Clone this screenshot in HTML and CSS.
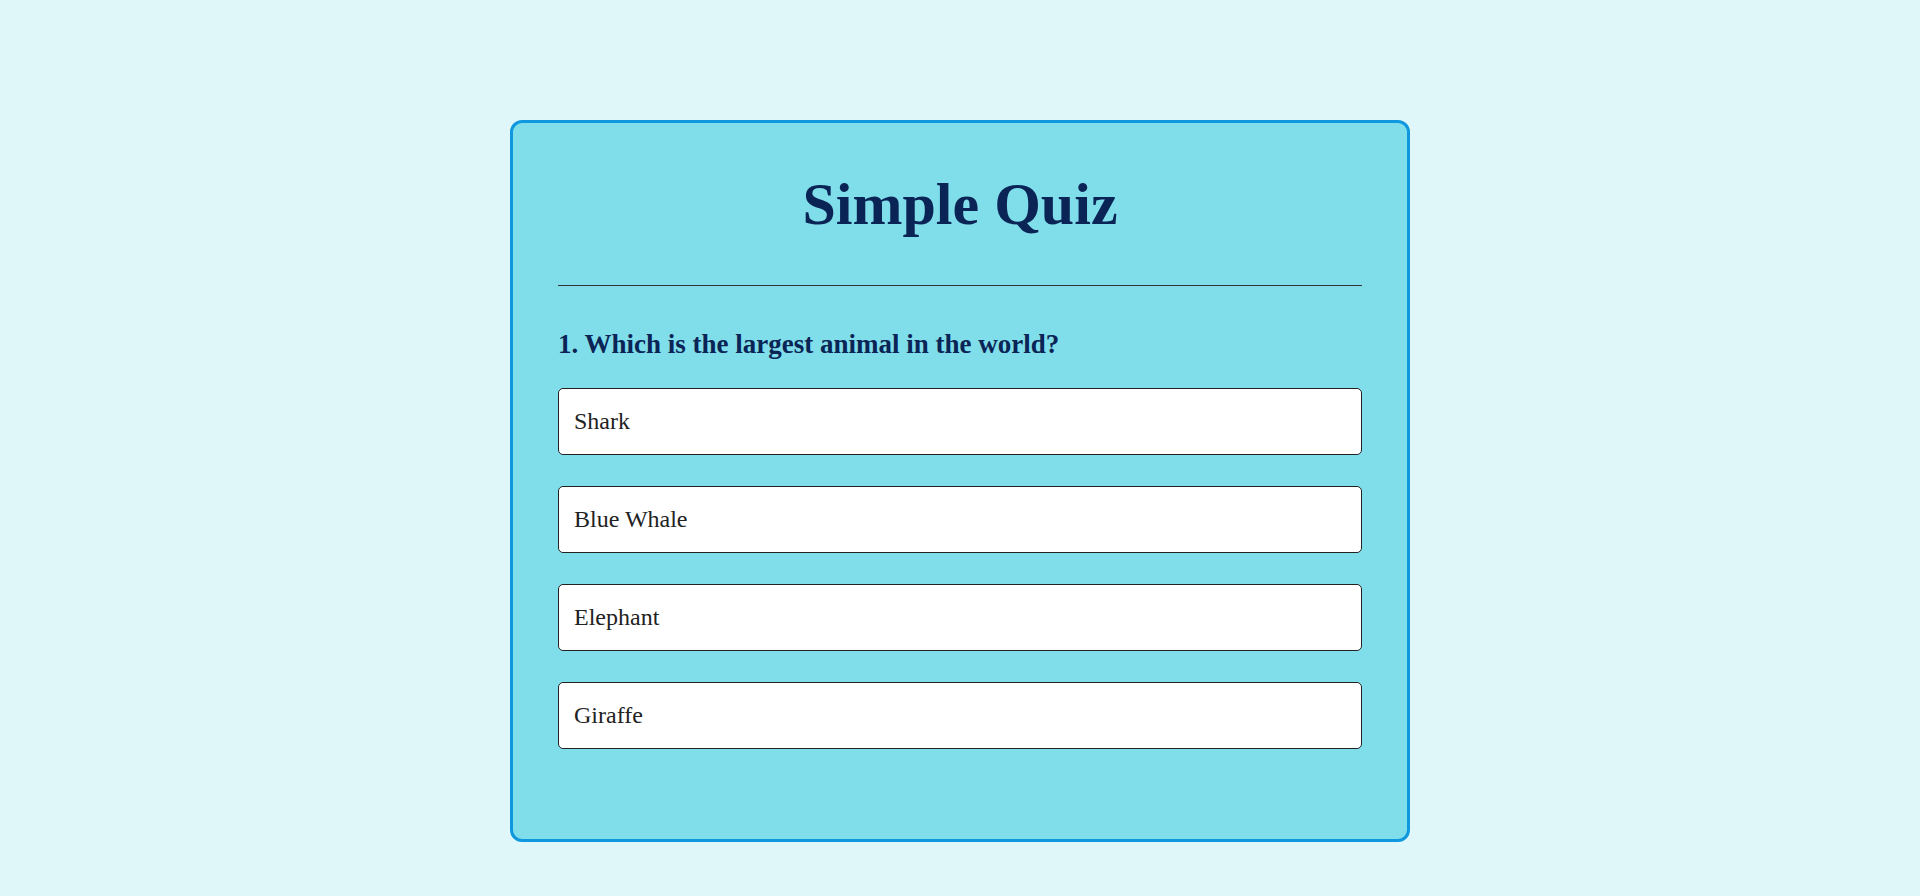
FILE: index.html
```html
<!DOCTYPE html>
<html>
<head>
<meta charset="utf-8">
<title>Simple Quiz</title>
<link rel="stylesheet" href="styles.css">
</head>
<body>
<div class="app">
  <h1 class="title">Simple Quiz</h1>
  <hr class="divider">
  <div class="quiz">
    <h2 class="question">1. Which is the largest animal in the world?</h2>
    <div class="answers">
      <button class="btn">Shark</button>
      <button class="btn">Blue Whale</button>
      <button class="btn">Elephant</button>
      <button class="btn">Giraffe</button>
    </div>
  </div>
</div>
</body>
</html>
```
FILE: styles.css
```css
* {
  box-sizing: border-box;
}
body {
  margin: 0;
  background: #e0f7fa;
  font-family: "Liberation Serif", "Times New Roman", serif;
}
.app {
  width: 900px;
  margin: 120px auto 0;
  background: #80deea;
  border: 3px solid #0f98dd;
  border-radius: 12px;
  padding: 30px 45px 90px;
}
.title {
  margin: 0;
  text-align: center;
  font-size: 60px;
  font-weight: bold;
  color: #0a2456;
  line-height: 1.15;
  padding-top: 17px;
}
.divider {
  border: 0;
  border-top: 1px solid #333;
  margin: 46px 0 0;
}
.question {
  margin: 43px 0 0;
  font-size: 27px;
  font-weight: bold;
  color: #0a2456;
  line-height: 1.15;
}
.answers {
  display: flex;
  flex-direction: column;
  gap: 31px;
  margin-top: 28px;
}
.btn {
  display: block;
  width: 100%;
  height: 67px;
  background: #fff;
  border: 1px solid #222;
  border-radius: 5px;
  padding: 0 15px;
  text-align: left;
  font-family: "Liberation Serif", "Times New Roman", serif;
  font-size: 24px;
  color: #222;
}
```
